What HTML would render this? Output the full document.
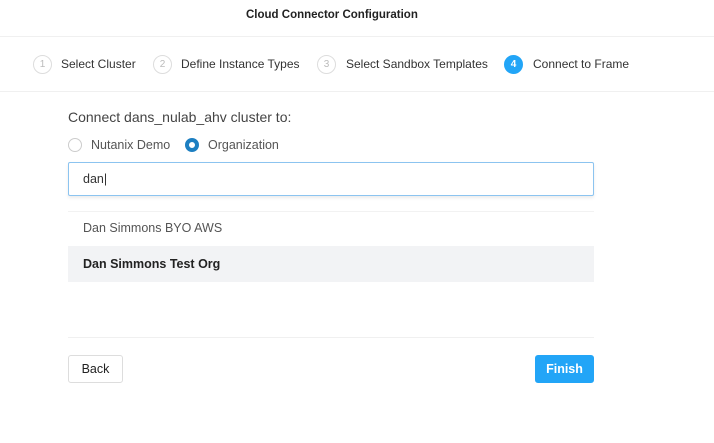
<!DOCTYPE html>
<html><head><style>
body{margin:0;width:714px;height:443px;background:#fff;font-family:"Liberation Sans",sans-serif;position:relative;overflow:hidden;color:#333}
.a{position:absolute}
.c{position:absolute;width:19px;height:19px;border:1px solid #ddd;border-radius:50%;box-sizing:border-box;font-size:10px;color:#bbb;text-align:center;line-height:17px;top:55px}
.s{position:absolute;top:57px;font-size:12px;color:#333}
</style></head><body>
<div class="a" style="top:9px;left:246px;font-size:11.5px;font-weight:bold;color:#222">Cloud Connector Configuration</div>
<div class="a" style="top:36px;left:0;width:714px;height:1px;background:#f0f0f0"></div>
<div class="c" style="left:33px">1</div><div class="s" style="left:61px">Select Cluster</div>
<div class="c" style="left:153px">2</div><div class="s" style="left:181px">Define Instance Types</div>
<div class="c" style="left:317px">3</div><div class="s" style="left:346px">Select Sandbox Templates</div>
<div class="c" style="left:504px;background:#22a5f7;border-color:#22a5f7;color:#fff;font-weight:bold">4</div><div class="s" style="left:533px">Connect to Frame</div>
<div class="a" style="top:91px;left:0;width:714px;height:1px;background:#f0f0f0"></div>
<div class="a" style="top:109px;left:68px;font-size:14px;color:#444">Connect dans_nulab_ahv cluster to:</div>
<div class="a" style="top:138px;left:68px;width:14px;height:14px;border:1px solid #ccc;border-radius:50%;box-sizing:border-box"></div>
<div class="a" style="top:138px;left:91px;font-size:12.5px;color:#555">Nutanix Demo</div>
<div class="a" style="top:138px;left:185px;width:14px;height:14px;border:4px solid #1d7fc1;border-radius:50%;box-sizing:border-box"></div>
<div class="a" style="top:138px;left:208px;font-size:12.5px;color:#555">Organization</div>
<div class="a" style="top:162px;left:68px;width:526px;height:34px;border:1px solid #8cc4f0;border-radius:2px;box-sizing:border-box;box-shadow:0 2px 3px rgba(0,0,0,.08)"></div>
<div class="a" style="top:172px;left:83px;font-size:12.5px;color:#333">dan|</div>
<div class="a" style="top:211px;left:68px;width:526px;height:1px;background:#f2f2f2"></div>
<div class="a" style="top:221px;left:83px;font-size:12.5px;color:#555">Dan Simmons BYO AWS</div>
<div class="a" style="top:246px;left:68px;width:526px;height:36px;background:#f2f3f5"></div>
<div class="a" style="top:257px;left:83px;font-size:12.5px;font-weight:bold;color:#222">Dan Simmons Test Org</div>
<div class="a" style="top:337px;left:68px;width:526px;height:1px;background:#f0f0f0"></div>
<div class="a" style="top:355px;left:68px;width:55px;height:28px;border:1px solid #ddd;border-radius:3px;box-sizing:border-box;font-size:12.5px;text-align:center;line-height:26px;color:#222">Back</div>
<div class="a" style="top:355px;left:535px;width:59px;height:28px;background:#22a5f7;border-radius:3px;font-size:12.5px;text-align:center;line-height:28px;color:#fff;font-weight:bold">Finish</div>
</body></html>
